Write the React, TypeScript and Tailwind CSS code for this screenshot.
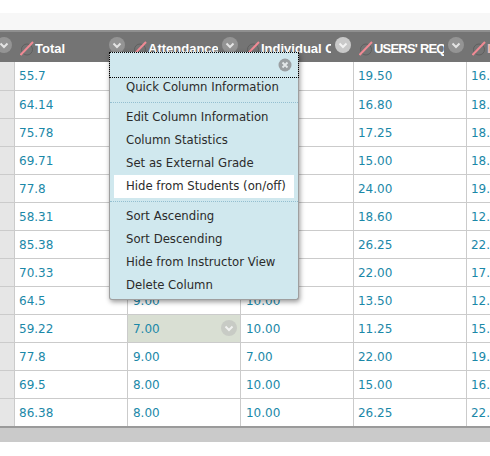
const rows = [
  ["55.7", "", "", "19.50", "16."],
  ["64.14", "", "", "16.80", "18."],
  ["75.78", "", "", "17.25", "18."],
  ["69.71", "", "", "15.00", "18."],
  ["77.8", "", "", "24.00", "19."],
  ["58.31", "", "", "18.60", "12."],
  ["85.38", "", "", "26.25", "22."],
  ["70.33", "", "", "22.00", "17."],
  ["64.5", "9.00", "10.00", "13.50", "12."],
  ["59.22", "7.00", "10.00", "11.25", "15."],
  ["77.8", "9.00", "7.00", "22.00", "19."],
  ["69.5", "8.00", "10.00", "15.00", "16."],
  ["86.38", "8.00", "10.00", "26.25", "22."],
];

function Slash() {
  return (
    <svg width="15" height="15" viewBox="0 0 15 15" className="shrink-0">
      <circle cx="7" cy="8.5" r="5.5" fill="none" stroke="#5f5f5f" strokeWidth="1" />
      <line x1="0.5" y1="14" x2="13" y2="1" stroke="#f08a94" strokeWidth="2" />
    </svg>
  );
}

function Chevron({ bg, size = 16 }: { bg: string; size?: number }) {
  return (
    <svg width={size} height={size} viewBox="0 0 16 16" className="shrink-0">
      <circle cx="8" cy="8" r="8" fill={bg} />
      <path d="M4.5 6.5 L8 10 L11.5 6.5" fill="none" stroke="#ffffff" strokeOpacity="0.75" strokeWidth="2" />
    </svg>
  );
}

function HeaderCell({ label, chevron, tight }: { label: string; chevron: string; tight?: boolean }) {
  return (
    <div className="w-[113px] h-full relative flex items-center pl-[5px] pt-[3px] overflow-hidden">
      <Slash />
      <span className={`text-white font-bold text-[13px] whitespace-nowrap overflow-hidden w-[70px] font-['Liberation_Sans',sans-serif] ${tight ? "tracking-[-0.8px]" : ""}`}>{label}</span>
      <div className="absolute right-[3px] top-[5px]">
        <Chevron bg={chevron} />
      </div>
    </div>
  );
}

function Item({ children, active }: { children: string; active?: boolean }) {
  return (
    <div className={`h-[23px] flex items-center whitespace-nowrap text-[11.7px] text-[#2b2b2b] ${active ? "bg-white ml-[4px] mr-[4px] pl-[12px]" : "pl-[16px]"}`}>
      {children}
    </div>
  );
}

export default function App() {
  return (
    <div className="w-[490px] h-[456px] bg-white overflow-hidden relative font-['DejaVu_Sans','Liberation_Sans',sans-serif]">
      <div className="h-[13px] bg-white" />
      <div className="h-[17px] bg-[#f7f7f7]" />
      <div className="h-[32px] bg-[#747474] border-t-[2px] border-[#8f8f8f] flex">
        <div className="w-[15px] h-full relative overflow-hidden shrink-0">
          <div className="absolute -left-[4px] top-[5px]"><Chevron bg="#949494" /></div>
        </div>
        <HeaderCell label="Total" chevron="#949494" />
        <HeaderCell label="Attendance" chevron="#949494" />
        <HeaderCell label="Individual C" chevron="#c9c9c9" />
        <HeaderCell label="USERS' REQ" chevron="#949494" tight />
        <div className="flex-1 flex items-center pl-[5px] pt-[3px] overflow-hidden">
          <Slash />
          <span className="text-[#e9b9b9] font-bold text-[13px] font-['Liberation_Sans',sans-serif]">D</span>
        </div>
      </div>
      <div>
        {rows.map((r, i) => (
          <div key={i} className={`flex ${i === 0 ? "h-[29px]" : i === rows.length - 1 ? "h-[27px]" : "h-[28px]"} ${i < rows.length - 1 ? "border-b-[1px] border-[#cbcbcb]" : ""}`}>
            <div className="w-[15px] shrink-0 bg-[#e6e6e6] border-r-[1px] border-[#cbcbcb]" />
            {r.map((c, j) => (
              <div
                key={j}
                className={`${j === 4 ? "flex-1" : "w-[113px]"} relative flex items-center text-[12px] text-[#1b88a8] ${j === 0 || j === 3 || j === 4 ? "pl-[4px]" : "pl-[5px]"} ${j < 4 ? "border-r-[1px] border-[#cbcbcb]" : ""} ${i === 9 && j === 1 ? "bg-[#d9dfd3]" : ""}`}
              >
                {c}
                {i === 9 && j === 1 && (
                  <div className="absolute right-[3px] top-[5px]"><Chevron bg="#c8cbc5" /></div>
                )}
              </div>
            ))}
          </div>
        ))}
      </div>
      <div className="h-[16px] bg-[#cacaca] border-t-[2px] border-[#9a9a9a]" />

      <div className="absolute left-[109px] top-[52px] w-[190px] h-[248px] bg-[#d0e8ee] rounded-b-[3px] border-x-[1px] border-b-[1px] border-[#9f9f9f] shadow-[1px_2px_5px_rgba(0,0,0,0.4)]">
        <div className="h-[26px] border-[1px] border-dotted border-black -mx-[1px] relative">
          <svg width="14" height="14" viewBox="0 0 14 14" className="absolute right-[6px] top-[5px]">
            <circle cx="7" cy="7" r="6.5" fill="#9a9fa2" />
            <path d="M4.5 4.5 L9.5 9.5 M9.5 4.5 L4.5 9.5" stroke="#e4e8ea" strokeWidth="1.8" />
          </svg>
        </div>
        <div className="h-[23px] pl-[16px] flex items-center whitespace-nowrap text-[11.7px] text-[#2b2b2b] -mt-[2px]">Quick Column Information</div>
        <div className="border-t-[1px] border-dotted border-[#94bfd0] mt-[3px] mb-[3px]" />
        <Item>Edit Column Information</Item>
        <Item>Column Statistics</Item>
        <Item>Set as External Grade</Item>
        <Item active>Hide from Students (on/off)</Item>
        <div className="border-t-[1px] border-dotted border-[#94bfd0] mt-[3px] mb-[3px]" />
        <Item>Sort Ascending</Item>
        <Item>Sort Descending</Item>
        <Item>Hide from Instructor View</Item>
        <Item>Delete Column</Item>
      </div>
    </div>
  );
}
